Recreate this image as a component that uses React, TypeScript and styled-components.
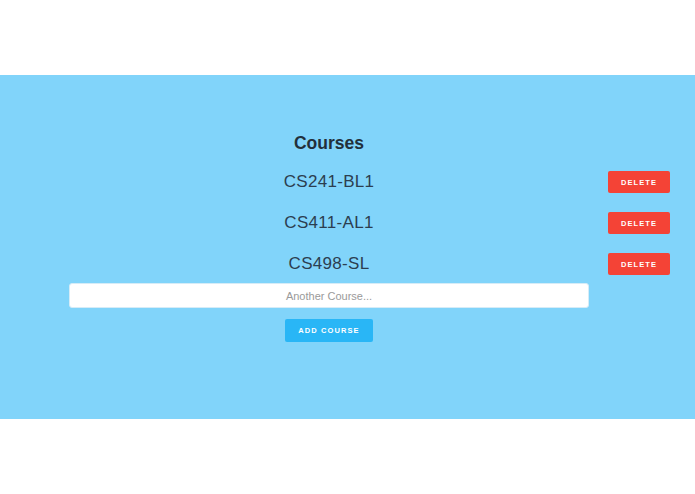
import { Fragment } from 'react';
import styled, { createGlobalStyle } from 'styled-components';

const GlobalStyle = createGlobalStyle`
  html, body {
    margin: 0;
    padding: 0;
    background: #ffffff;
    font-family: 'Liberation Sans', Arial, Helvetica, sans-serif;
  }
`;

const Page = styled.div`
  padding-top: 75px;
  height: 494px;
  box-sizing: border-box;
`;

const Band = styled.section`
  background: #81d4fa;
  height: 344px;
  box-sizing: border-box;
  padding: 58px 0 0 69px;
`;

const Board = styled.div`
  display: grid;
  grid-template-columns: 520px 62px;
  column-gap: 19px;
  align-items: center;
`;

const Title = styled.h2`
  grid-column: 1;
  margin: 0 0 18px;
  font-size: 17.5px;
  line-height: 20px;
  font-weight: 700;
  color: #22303b;
  text-align: center;
`;

const CourseName = styled.div`
  grid-column: 1;
  font-size: 17px;
  line-height: 20px;
  letter-spacing: 0.3px;
  color: #2c3e50;
  text-align: center;
`;

const ActionButton = styled.button<{ $tone: 'red' | 'blue' }>`
  height: ${(p) => (p.$tone === 'red' ? '22px' : '23px')};
  padding: 0;
  border: none;
  border-radius: 2px;
  background: ${(p) => (p.$tone === 'red' ? '#f44336' : '#29b6f6')};
  color: #ffffff;
  font-family: inherit;
  font-size: 7.5px;
  font-weight: 700;
  letter-spacing: 1.1px;
  text-transform: uppercase;
`;

const DeleteButton = styled(ActionButton)`
  grid-column: 2;
  width: 62px;
`;

const Gap = styled.div<{ $h: number }>`
  grid-column: 1 / span 2;
  height: ${(p) => p.$h}px;
`;

const CourseInput = styled.input`
  grid-column: 1;
  height: 25px;
  box-sizing: border-box;
  border: 1px solid #d6ecf7;
  border-radius: 3px;
  background: #ffffff;
  font-family: inherit;
  font-size: 11px;
  text-align: center;
  outline: none;
  &::placeholder {
    color: #9a9a9a;
  }
`;

const AddButton = styled(ActionButton)`
  grid-column: 1;
  justify-self: center;
  width: 88px;
`;

const courses = ['CS241-BL1', 'CS411-AL1', 'CS498-SL'];

const App = () => {
  return (
    <Page>
      <GlobalStyle />
      <Band>
        <Board>
          <Title>Courses</Title>
          {courses.map((name, i) => (
            <Fragment key={name}>
              {i > 0 && <Gap $h={19} />}
              <CourseName>{name}</CourseName>
              <DeleteButton $tone='red'>Delete</DeleteButton>
            </Fragment>
          ))}
          <Gap $h={8} />
          <CourseInput placeholder='Another Course...' />
          <Gap $h={11} />
          <AddButton $tone='blue'>Add Course</AddButton>
        </Board>
      </Band>
    </Page>
  );
};

export default App;
